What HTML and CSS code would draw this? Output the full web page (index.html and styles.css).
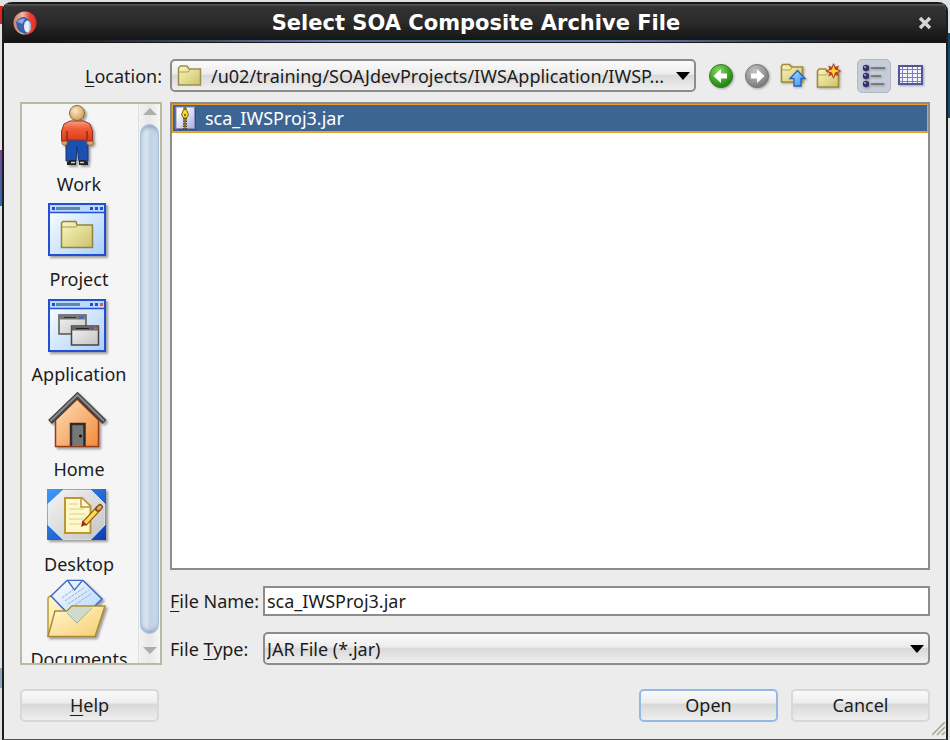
FILE: index.html
```html
<!DOCTYPE html>
<html lang="en">
<head>
<meta charset="utf-8">
<title>Select SOA Composite Archive File</title>
<link rel="stylesheet" href="styles.css">
</head>
<body>
<svg class="defs" aria-hidden="true">
  <defs>
    <linearGradient id="folder" x1="0" y1="0" x2="1" y2="1"><stop offset="0" stop-color="#fbf7c0"/><stop offset="1" stop-color="#cbc26c"/></linearGradient>
    <linearGradient id="pane" x1="0" y1="0" x2="1" y2="1"><stop offset="0" stop-color="#ffffff"/><stop offset="1" stop-color="#a9d0fa"/></linearGradient>
    <linearGradient id="grey" x1="0" y1="0" x2="1" y2="1"><stop offset="0" stop-color="#f4f4f4"/><stop offset="1" stop-color="#c4c4c4"/></linearGradient>
    <linearGradient id="shirt" x1="0" y1="0" x2="0" y2="1"><stop offset="0" stop-color="#f8a080"/><stop offset=".4" stop-color="#f05a34"/><stop offset="1" stop-color="#dc3c18"/></linearGradient>
    <radialGradient id="skin" cx=".4" cy=".35" r=".7"><stop offset="0" stop-color="#fbe9c6"/><stop offset="1" stop-color="#cf9c50"/></radialGradient>
    <linearGradient id="wall" x1="0" y1="0" x2="1" y2="1"><stop offset="0" stop-color="#ffe0bd"/><stop offset="1" stop-color="#f08c38"/></linearGradient>
    <linearGradient id="blue" x1="0" y1="0" x2="1" y2="1"><stop offset="0" stop-color="#3f9af5"/><stop offset="1" stop-color="#0a3fb0"/></linearGradient>
    <linearGradient id="gold" x1="0" y1="0" x2="1" y2="1"><stop offset="0" stop-color="#fffad0"/><stop offset="1" stop-color="#f6cc70"/></linearGradient>
    <radialGradient id="green" cx=".4" cy=".3" r=".8"><stop offset="0" stop-color="#8ed66a"/><stop offset=".6" stop-color="#35a11f"/><stop offset="1" stop-color="#1b6e10"/></radialGradient>
    <radialGradient id="dim" cx=".4" cy=".3" r=".8"><stop offset="0" stop-color="#c4c4c4"/><stop offset=".6" stop-color="#929292"/><stop offset="1" stop-color="#6c6c6c"/></radialGradient>
    <linearGradient id="arrow" x1="0" y1="0" x2="1" y2="1"><stop offset="0" stop-color="#b8e2ff"/><stop offset="1" stop-color="#2d8df0"/></linearGradient>
    <linearGradient id="ring" x1="0" y1="0" x2="1" y2="0"><stop offset="0" stop-color="#c98270"/><stop offset=".4" stop-color="#f0b7a6"/><stop offset=".7" stop-color="#ee4436"/><stop offset="1" stop-color="#e22a20"/></linearGradient>
    <linearGradient id="sheet" x1="0" y1="0" x2="1" y2="1"><stop offset=".2" stop-color="#ffffff"/><stop offset="1" stop-color="#a9a9e0"/></linearGradient>
  </defs>
</svg>

<main class="dialog">
  <header class="titlebar">
    <svg class="logo" viewBox="0 0 24 24" aria-hidden="true">
      <circle cx="12" cy="12" r="11.500" fill="url(#ring)"/>
      <path d="M3 11Q6 6 11 6Q18 8 18 14Q18 20 13 23Q6 22 4 17Z" fill="#3c62ac"/>
      <path d="M4 11Q7 7 12 8L9 13Q6 11 4 11Z" fill="#8fabdc"/>
      <ellipse cx="14.500" cy="15.500" rx="3.500" ry="6" fill="#e4f2f8"/>
      <path d="M15 9.500Q18 15 15 21.500Q18.500 19 18 14Q17 10 15 9.500Z" fill="#9fc0cc"/>
    </svg>
    <h1 class="title">Select SOA Composite Archive File</h1>
    <button class="close" type="button" aria-label="Close">
      <svg width="14" height="14" viewBox="0 0 14 14"><path d="M2 2L12 12M12 2L2 12" stroke="#d6d6d6" stroke-width="3.400"/></svg>
    </button>
  </header>

  <form class="content">
    <label class="location-label" for="location"><u>L</u>ocation:</label>
    <div class="location-row">
      <div class="combo">
        <svg class="combo-icon" width="26" height="24" viewBox="0 0 26 24" aria-hidden="true"><path d="M1.500 21V4L3.500 2H10L12 5H23.500V21Z" fill="url(#folder)" stroke="#99904a" stroke-width="1.500"/><path d="M2 8H11L13 6" fill="none" stroke="#aaa04f"/></svg>
        <select id="location"><option>/u02/training/SOAJdevProjects/IWSApplication/IWSP...</option></select>
        <svg class="combo-arrow" width="14" height="8" viewBox="0 0 14 8" aria-hidden="true"><path d="M0 0H14L7 8Z"/></svg>
      </div>
      <div class="toolbar">
        <button class="tool" type="button" aria-label="Back"><svg width="28" height="28" viewBox="0 0 28 28"><circle cx="14" cy="14" r="11.500" fill="url(#green)" stroke="#3c7a30"/><path d="M6.500 14L14 7V11.500H20V16.500H14V21Z" fill="#fff"/></svg></button>
        <button class="tool" type="button" aria-label="Forward"><svg width="28" height="28" viewBox="0 0 28 28"><circle cx="14" cy="14" r="11.500" fill="url(#dim)" stroke="#777"/><path d="M21.500 14L14 7V11.500H8V16.500H14V21Z" fill="#fff"/></svg></button>
        <button class="tool" type="button" aria-label="Up one level"><svg width="28" height="28" viewBox="0 0 28 28"><path d="M2.500 20V4L4 2.500H10.500L12.500 5H23.500V20Z" fill="url(#folder)" stroke="#a08c3a" stroke-width="1.600"/><path d="M3 8H11L13 6" fill="none" stroke="#b2a455"/><path d="M18.500 8.500L26 16.500H22V24H15V16.500H11Z" fill="url(#arrow)" stroke="#2a62c4" stroke-width="1.400"/></svg></button>
        <button class="tool" type="button" aria-label="New folder"><svg width="28" height="28" viewBox="0 0 28 28"><path d="M2.500 25V9L4 7H10.500L12.500 10H23.500V25Z" fill="url(#folder)" stroke="#a08c3a" stroke-width="1.600"/><path d="M3 13H11L13 11" fill="none" stroke="#b2a455"/><path d="M18.500 1L20.500 5 24 3.500 22.500 7 26.500 9 22.500 11 24 14.500 20.500 13 18.500 17 16.500 13 13 14.500 14.500 11 10.500 9 14.500 7 13 3.500 16.500 5Z" fill="#b83c22"/><path d="M18.500 3L20 7.500 24.500 9 20 10.500 18.500 15 17 10.500 12.500 9 17 7.500Z" fill="#ffd43c"/></svg></button>
        <button class="tool tool-on" type="button" aria-label="List view" aria-pressed="true"><svg width="28" height="28" viewBox="0 0 28 28"><g fill="#33336f"><circle cx="6" cy="6" r="3.200"/><circle cx="6" cy="14" r="3.200"/><circle cx="6" cy="22" r="3.200"/></g><g fill="#a9a9d8"><circle cx="5" cy="5" r="1"/><circle cx="5" cy="13" r="1"/><circle cx="5" cy="21" r="1"/></g><path d="M11 6H25M11 14H21M11 22H24" stroke="#666" stroke-width="1.700"/></svg></button>
        <button class="tool" type="button" aria-label="Details view"><svg width="28" height="28" viewBox="0 0 28 28"><path d="M3 4H26V22H3Z" fill="#f3f3fb"/><path d="M3 7.500H26M3 11.500H26M3 15.500H26M3 19.500H26M6.500 4V22M11.500 4V22M16.500 4V22M21.500 4V22" stroke="#8080b8"/><path d="M3 4H26V22H3Z" fill="none" stroke="#54549a" stroke-width="2"/></svg></button>
      </div>
    </div>

    <nav class="places" aria-label="Places">
      <div class="places-list">
        <button class="place" type="button">
          <svg class="place-icon" viewBox="0 0 70 68" aria-hidden="true">
            <path d="M22 34H44V57H35L33 42 32 57H22Z" fill="#1c4fae" stroke="#123578"/>
            <path d="M23 61V58L27 56H32V61ZM35 61V56H40L44 58V61Z" fill="#222"/><path d="M27 58.500H31M36 58.500H40" stroke="#ccc" stroke-width="1.500"/>
            <path d="M18 36H23V40L21 41.500 18 40ZM43 36H49V40L46 41.500 43 40Z" fill="#dba866" stroke="#9b642a" stroke-width=".8"/>
            <path d="M26 17H40L46 20 48.500 27V37H43V27V36H23V27 37H17.500V27L20 20Z" fill="url(#shirt)" stroke="#99301c"/>
            <path d="M23 36V27M43 36V27" stroke="#99301c"/>
            <circle cx="33" cy="9" r="7.500" fill="url(#skin)" stroke="#8d642c"/>
          </svg>
          <span>Work</span>
        </button>
        <button class="place" type="button">
          <svg class="place-icon" viewBox="0 0 70 68" aria-hidden="true">
            <rect x="5" y="5" width="56" height="51" fill="url(#pane)" stroke="#2350d0" stroke-width="2"/><path d="M6 6H60V13H6Z" fill="#bcd8fa"/><path d="M6 13.500H60" stroke="#2350d0" stroke-width="1.500"/>
            <path d="M12 9.500H36" stroke="#6285ae" stroke-width="3"/><path d="M8 9.500H11M46 9.500H49M51 9.500H54M56 9.500H59" stroke="#1e4edc" stroke-width="3"/>
            <path d="M17.500 48.500V24L19 22.500H32L33 26H48.500V48.500Z" fill="url(#folder)" stroke="#8f853c" stroke-width="1.500"/><path d="M18 28H32L34 26" fill="none" stroke="#a59a4a"/>
          </svg>
          <span>Project</span>
        </button>
        <button class="place" type="button">
          <svg class="place-icon" viewBox="0 0 70 68" aria-hidden="true">
            <rect x="5" y="6" width="56" height="51" fill="url(#pane)" stroke="#2350d0" stroke-width="2"/><path d="M6 7H60V14H6Z" fill="#bcd8fa"/><path d="M6 14.500H60" stroke="#2350d0" stroke-width="1.500"/>
            <path d="M12 10.500H36" stroke="#6285ae" stroke-width="3"/><path d="M8 10.500H11M46 10.500H49M51 10.500H54" stroke="#1e4edc" stroke-width="3"/><path d="M56 10.500H59" stroke="#d8603c" stroke-width="3"/>
            <rect x="15" y="21" width="27" height="19" fill="url(#grey)" stroke="#555" stroke-width="1.500"/><path d="M15 23.500H42" stroke="#777" stroke-width="4"/><path d="M20 23.500H32" stroke="#333"/><path d="M35 23.500H39" stroke="#2e62dc" stroke-width="2"/>
            <rect x="27.500" y="32" width="27" height="19" fill="url(#grey)" stroke="#444" stroke-width="1.500"/><path d="M27.500 34.500H54.500" stroke="#666" stroke-width="4"/><path d="M32 34.500H45" stroke="#222"/><path d="M47 34.500H50" stroke="#2e62dc" stroke-width="2"/><path d="M50 34.500H53" stroke="#d8603c" stroke-width="2"/>
          </svg>
          <span>Application</span>
        </button>
        <button class="place" type="button">
          <svg class="place-icon" viewBox="0 0 70 68" aria-hidden="true">
            <path d="M11.500 31L33 10 54.500 31V57.500H11.500Z" fill="url(#wall)" stroke="#963c1a" stroke-width="1.500"/>
            <path d="M27 57V35H40.500V57" fill="#777" stroke="#2d2d2d" stroke-width="2.500"/><circle cx="36.500" cy="47" r="1.500" fill="#111"/>
            <path d="M6 33L33.500 6.500 60.500 33" fill="none" stroke="#424242" stroke-width="5.500" stroke-linejoin="miter"/><path d="M6.500 32L33.500 6 60 32" fill="none" stroke="#8a8a8a" stroke-width="2"/>
          </svg>
          <span>Home</span>
        </button>
        <button class="place" type="button">
          <svg class="place-icon" viewBox="0 0 70 68" aria-hidden="true">
            <rect x="3" y="5" width="59" height="51" fill="url(#blue)"/><path d="M19 6H47L61 20V41L47 55.500H19L4 41V20Z" fill="url(#grey)" stroke="#e9f1ff" stroke-width=".8"/>
            <path d="M21 14H38L46.500 22V49H21Z" fill="#fff8c8" stroke="#bd962d" stroke-width="2"/><path d="M37 14V23H46" fill="#fffbe4" stroke="#bd962d" stroke-width="1.500"/><path d="M25 20H34M25 25H40M25 30H42M25 35H40M25 40H37" stroke="#ddd09a"/>
            <path d="M40 40L55 24" stroke="#8a5516" stroke-width="6"/><path d="M41 39L55 24" stroke="#ffdc52" stroke-width="3.500"/><path d="M54 25L56 23" stroke="#8a5516" stroke-width="6" stroke-linecap="round"/><path d="M54.500 24.500L56 23" stroke="#e8a884" stroke-width="3" stroke-linecap="round"/><path d="M37 43L38.500 36.500 42.500 40.500Z" fill="#a82418"/>
          </svg>
          <span>Desktop</span>
        </button>
        <button class="place" type="button">
          <svg class="place-icon" viewBox="0 0 70 68" aria-hidden="true">
            <path d="M4 57V19L6 17H18L22 22H50V57Z" fill="url(#gold)" stroke="#bb983a" stroke-width="1.500"/>
            <path d="M7 17L23 1.500H39L58 20 33 44Z" fill="url(#pane)" stroke="#3f68c8" stroke-width="1.500"/><path d="M24 2L30.500 11 38 2" fill="#e7f2ff" stroke="#3f68c8" stroke-width="1.300"/><path d="M18 19L30 10M21 22L41 8M24 25L45 11M28 28L48 14" stroke="#9bacc9" stroke-dasharray="3 1"/>
            <path d="M4 57.500L11 32H23L28 27H61L51 57.500Z" fill="url(#gold)" stroke="#a98a37" stroke-width="1.500"/><path d="M23 33L28 28H48L33 44Z" fill="#cfdccb"/><path d="M23 34L33 44 48 29" fill="none" stroke="#9eb3a8"/>
          </svg>
          <span>Documents</span>
        </button>
      </div>
      <div class="scroll" aria-hidden="true">
        <svg width="14" height="7" viewBox="0 0 14 7"><path d="M0 7H14L7 0Z" fill="#adadad"/></svg>
        <div class="thumb"></div>
        <svg width="14" height="7" viewBox="0 0 14 7"><path d="M0 0H14L7 7Z" fill="#adadad"/></svg>
      </div>
    </nav>

    <section class="files">
      <ul class="file-list" role="listbox" aria-label="Files">
        <li class="file" role="option" aria-selected="true">
          <svg width="22" height="24" viewBox="0 0 22 24" aria-hidden="true"><path d="M3 2H21V24H3Z" fill="#2f4f7c"/><rect x="1" y="1" width="18.500" height="21.500" fill="url(#sheet)" stroke="#8587bd"/><path d="M10 1V4" stroke="#8a6f1c" stroke-width="3"/><path d="M10 12V23" stroke="#4f3f12" stroke-width="4" stroke-dasharray="1.500 1"/><path d="M10 12V23" stroke="#8a6f1c" stroke-width="1.500"/><path d="M8.500 3.500H11.500L13.500 9 11.500 12H8.500L6.500 9Z" fill="#f4dc2e" stroke="#7a651a"/><circle cx="10" cy="9" r="1" fill="#5d4b14"/></svg>
          <span>sca_IWSProj3.jar</span>
        </li>
      </ul>
      <div class="field">
        <label for="file-name"><u>F</u>ile Name:</label>
        <input class="text" id="file-name" type="text" value="sca_IWSProj3.jar">
      </div>
      <div class="field">
        <label for="file-type">File <u>T</u>ype:</label>
        <div class="combo">
          <select id="file-type"><option>JAR File (*.jar)</option></select>
          <svg class="combo-arrow" width="14" height="8" viewBox="0 0 14 8" aria-hidden="true"><path d="M0 0H14L7 8Z"/></svg>
        </div>
      </div>
    </section>

    <footer class="actions">
      <button class="btn btn-help" type="button"><u>H</u>elp</button>
      <button class="btn btn-default" type="button">Open</button>
      <button class="btn" type="button">Cancel</button>
    </footer>
  </form>
  <svg class="grip" width="14" height="14" viewBox="0 0 14 14" aria-hidden="true"><path d="M0 13L13 0M5 13L13 5M10 13L13 10" stroke="#a5a58c" stroke-width="1.500"/></svg>
</main>
</body>
</html>
```
FILE: styles.css
```css
* { box-sizing: border-box; }

body {
  margin: 0;
  height: 100vh;
  padding: 2px 2px 0;
  background:
    linear-gradient(#d8281e, #d8281e) 0 6px / 3px 18px no-repeat,
    linear-gradient(#7d4a92, #2a6cb8) 0 150px / 2px 56px no-repeat,
    linear-gradient(#8fa9c4, #8fa9c4) 0 668px / 2px 20px no-repeat,
    linear-gradient(#174a66, #174a66) 100% 33px / 3px 85px no-repeat,
    #dfe1e3;
  font-family: "Noto Sans", "Open Sans", sans-serif;
  font-size: 18px;
  line-height: 24px;
  color: #1c1c1c;
}

button, input, select {
  font: inherit;
  color: inherit;
  margin: 0;
}

u { text-underline-offset: 3px; }

.defs { position: absolute; width: 0; height: 0; }

.dialog {
  position: relative;
  display: flex;
  flex-direction: column;
  height: 100%;
  background: #ececec;
  border: 2px solid #1b1d1e;
  border-top: 0;
  border-bottom: 1px solid #555;
  border-radius: 9px 9px 0 0;
}

.titlebar {
  display: flex;
  align-items: center;
  height: 41px;
  padding: 0 11px 0 9px;
  background: linear-gradient(#1a1a1a 0, #1a1a1a 2px, #5a5a5a 2px, #333 5px, #2b2b2b 20px, #161616 37px, #161616 38px, transparent 38px),
    linear-gradient(90deg, #161616 5%, #5f82b4 35%, #5f82b4 65%, #161616 95%) 0 38px / 100% 2px no-repeat,
    #161616;
  border-radius: 8px 8px 0 0;
}

.logo { width: 24px; height: 24px; }

.title {
  flex: 1;
  margin: 0;
  text-align: center;
  font: bold 21px/28px "DejaVu Sans", sans-serif;
  color: #fff;
}

.close {
  display: flex;
  padding: 3px;
  border: 0;
  background: none;
}

.content {
  flex: 1;
  min-height: 0;
  display: grid;
  grid-template-columns: 142px minmax(0, 1fr);
  grid-template-rows: 34px minmax(0, 1fr) 33px;
  column-gap: 8px;
  padding: 16px 16px 17px;
}

.location-label { align-self: center; text-align: right; }

.location-row { display: flex; gap: 8px; }

.combo {
  flex: 1;
  min-width: 0;
  display: flex;
  align-items: center;
  height: 33px;
  padding: 0 4px 0 3px;
  border: 2px solid #8c8c8c;
  border-radius: 5px;
  background: linear-gradient(#fbfbfb, #ececec 45%, #d9d9d9 50%, #efefef);
}

.combo-icon { margin: 0 8px 0 2px; }

.combo select {
  flex: 1;
  min-width: 0;
  padding: 0;
  border: 0;
  background: none;
  appearance: none;
  outline: 0;
}

.combo-arrow { flex: none; pointer-events: none; }

.toolbar { display: flex; gap: 2px; padding-right: 3px; }

.tool {
  display: grid;
  place-items: center;
  width: 34px;
  height: 34px;
  padding: 0;
  border: 0;
  border-radius: 5px;
  background: none;
}

.tool svg { filter: drop-shadow(1px 1px 1px rgba(0, 0, 0, .3)); }

.tool-on {
  margin-left: 9px;
  border: 1px solid #b3b9c4;
  background: #c6ccd8;
}

.places {
  display: flex;
  margin-top: 9px;
  border: 2px solid #b9b9a4;
  background: #f5f5f5;
  overflow: hidden;
}

.places-list { flex: 1; padding-right: 2px; }

.place {
  display: block;
  width: 100%;
  padding: 0 0 3px;
  border: 0;
  background: none;
  text-align: center;
}

.place-icon {
  display: block;
  width: 70px;
  height: 68px;
  margin: 0 auto;
  filter: drop-shadow(2px 2px 1px rgba(0, 0, 0, .35));
}

.place span { display: block; }

.scroll {
  display: flex;
  flex-direction: column;
  align-items: center;
  gap: 9px;
  width: 22px;
  padding: 4px 0 9px;
  border-left: 1px solid #e0e0e0;
  background: linear-gradient(90deg, #f2f2f2, #e8e8e8 50%, #f6f6f6);
}

.thumb {
  flex: 1;
  width: 19px;
  margin-bottom: 4px;
  border: 1px solid #aabfd8;
  border-radius: 10px;
  background: linear-gradient(90deg, #c3d3e6, #d9e5f2 30%, #c3d3e6 55%, #c9d7e8);
  box-shadow: inset 0 5px 4px -3px #86a0c0, inset 0 -5px 4px -3px #86a0c0;
}

.files {
  display: flex;
  flex-direction: column;
  gap: 16px;
  min-width: 0;
  margin-top: 9px;
}

.file-list {
  flex: 1;
  min-height: 0;
  margin: 0;
  padding: 0;
  border: 2px solid #8c8c8c;
  background: #fff;
  list-style: none;
}

.file {
  display: flex;
  align-items: center;
  gap: 8px;
  height: 29px;
  padding: 0 2px;
  border: 1px solid #e8a02c;
  border-bottom-width: 2px;
  background: #3d6594;
  color: #fff;
}

.field { display: flex; align-items: center; }

.field label { width: 93px; }

.text {
  flex: 1;
  min-width: 0;
  height: 30px;
  padding: 0 2px;
  border: 2px solid #8c8c8c;
  background: #fff;
  outline: 0;
}

.field .combo { padding-left: 2px; }

.actions {
  grid-column: 1 / -1;
  display: flex;
  gap: 13px;
}

/* The side list and the file area end above the buttons. */
.places, .files { margin-bottom: 24px; }

.btn {
  width: 139px;
  height: 33px;
  padding: 0 0 2px;
  border: 2px solid #d8d8d8;
  border-radius: 5px;
  background: linear-gradient(#fafafa, #eee 40%, #d8d8d8 46%, #efefef);
}

.btn-help { margin-right: auto; }

.btn-default { border-color: #94b9e4; }

.grip { position: absolute; right: 0; bottom: 3px; }
```
